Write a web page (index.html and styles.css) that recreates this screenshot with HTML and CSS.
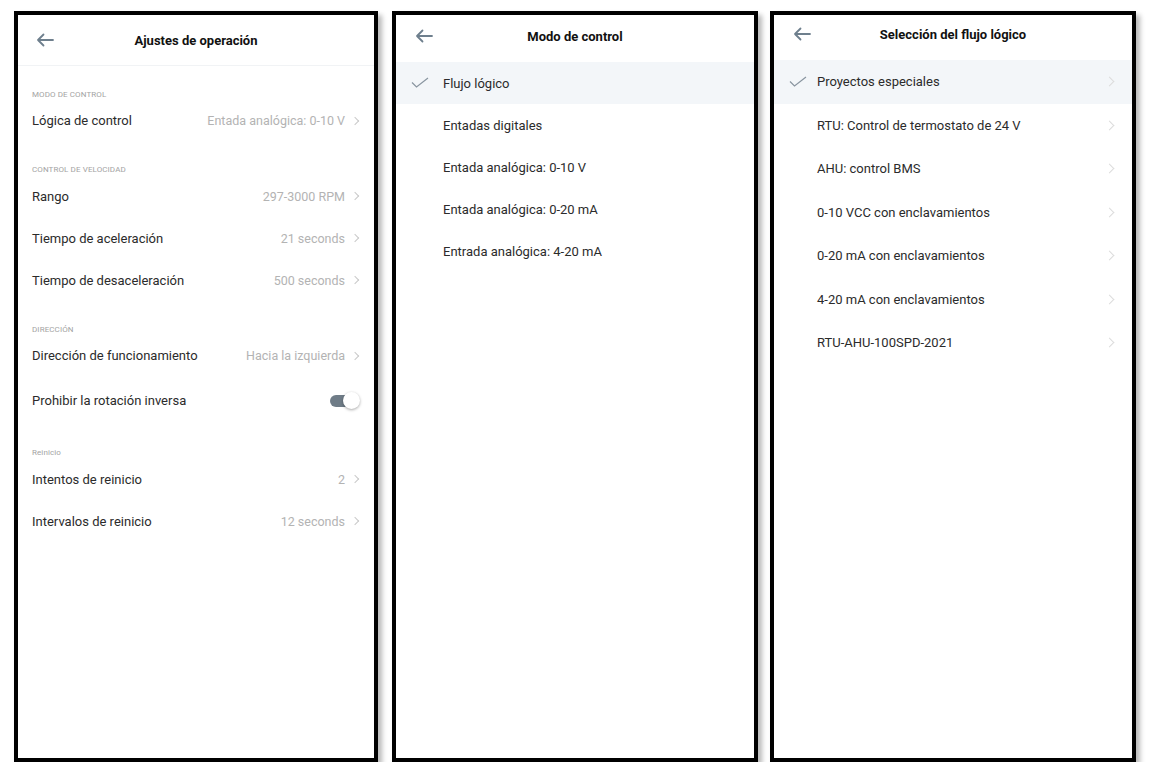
FILE: index.html
```html
<!DOCTYPE html>
<html lang="es">
<head>
<meta charset="utf-8">
<title>Ajustes</title>
<link rel="stylesheet" href="styles.css">
</head>
<body>
<div class="screens">
  <section class="phone phone-1">
    <header class="bar bar-1">
      <svg class="back" viewBox="0 0 18 14" width="18" height="14"><path d="M17 7H2M7.5 1.5L2 7l5.5 5.5" fill="none" stroke="#6e7f8d" stroke-width="1.8" stroke-linecap="round" stroke-linejoin="round"/></svg>
      <h1 class="title">Ajustes de operación</h1>
    </header>
    <div class="group-label">MODO DE CONTROL</div>
    <div class="row"><span class="label">Lógica de control</span><span class="value">Entada analógica: 0-10 V</span><span class="chev"></span></div>
    <div class="group-label">CONTROL DE VELOCIDAD</div>
    <div class="row"><span class="label">Rango</span><span class="value">297-3000 RPM</span><span class="chev"></span></div>
    <div class="row"><span class="label">Tiempo de aceleración</span><span class="value">21 seconds</span><span class="chev"></span></div>
    <div class="row"><span class="label">Tiempo de desaceleración</span><span class="value">500 seconds</span><span class="chev"></span></div>
    <div class="group-label">DIRECCIÓN</div>
    <div class="row"><span class="label">Dirección de funcionamiento</span><span class="value">Hacia la izquierda</span><span class="chev"></span></div>
    <div class="row row-tall"><span class="label">Prohibir la rotación inversa</span><span class="toggle"><span class="knob"></span></span></div>
    <div class="group-label">Reinicio</div>
    <div class="row"><span class="label">Intentos de reinicio</span><span class="value">2</span><span class="chev"></span></div>
    <div class="row"><span class="label">Intervalos de reinicio</span><span class="value">12 seconds</span><span class="chev"></span></div>
  </section>

  <section class="phone phone-2">
    <header class="bar bar-2">
      <svg class="back" viewBox="0 0 18 14" width="18" height="14"><path d="M17 7H2M7.5 1.5L2 7l5.5 5.5" fill="none" stroke="#6e7f8d" stroke-width="1.8" stroke-linecap="round" stroke-linejoin="round"/></svg>
      <h1 class="title">Modo de control</h1>
    </header>
    <div class="opt opt-2 selected"><svg class="check" viewBox="0 0 18 11" width="18" height="11"><path d="M1 5.5l4.5 4.5L17 1" fill="none" stroke="#8995a0" stroke-width="1.2"/></svg><span class="label">Flujo lógico</span></div>
    <div class="opt opt-2"><span class="label">Entadas digitales</span></div>
    <div class="opt opt-2"><span class="label">Entada analógica: 0-10 V</span></div>
    <div class="opt opt-2"><span class="label">Entada analógica: 0-20 mA</span></div>
    <div class="opt opt-2"><span class="label">Entrada analógica: 4-20 mA</span></div>
  </section>

  <section class="phone phone-3">
    <header class="bar bar-3">
      <svg class="back" viewBox="0 0 18 14" width="18" height="14"><path d="M17 7H2M7.5 1.5L2 7l5.5 5.5" fill="none" stroke="#6e7f8d" stroke-width="1.8" stroke-linecap="round" stroke-linejoin="round"/></svg>
      <h1 class="title">Selección del flujo lógico</h1>
    </header>
    <div class="opt opt-3 selected"><svg class="check" viewBox="0 0 18 11" width="18" height="11"><path d="M1 5.5l4.5 4.5L17 1" fill="none" stroke="#8995a0" stroke-width="1.2"/></svg><span class="label">Proyectos especiales</span><span class="chev light"></span></div>
    <div class="opt opt-3"><span class="label">RTU: Control de termostato de 24 V</span><span class="chev light"></span></div>
    <div class="opt opt-3"><span class="label">AHU: control BMS</span><span class="chev light"></span></div>
    <div class="opt opt-3"><span class="label">0-10 VCC con enclavamientos</span><span class="chev light"></span></div>
    <div class="opt opt-3"><span class="label">0-20 mA con enclavamientos</span><span class="chev light"></span></div>
    <div class="opt opt-3"><span class="label">4-20 mA con enclavamientos</span><span class="chev light"></span></div>
    <div class="opt opt-3"><span class="label">RTU-AHU-100SPD-2021</span><span class="chev light"></span></div>
  </section>
</div>
</body>
</html>
```

FILE: styles.css
```css
* { box-sizing: border-box; }

html, body {
  margin: 0;
  background: #ffffff;
}

body {
  font-family: Roboto, "Liberation Sans", sans-serif;
  color: #2b2b2b;
}

.screens {
  display: flex;
  align-items: flex-start;
  padding: 11px 0 0 14px;
  gap: 14px;
}

.phone {
  flex: none;
  width: 364px;
  height: 751px;
  border: 4px solid #000;
  background: #fff;
  box-shadow: 4px 4px 5px rgba(0, 0, 0, 0.28);
  overflow: hidden;
}

.phone-2 { width: 366px; }
.phone-3 { width: 366px; margin-left: -2px; }

/* header bar */
.bar {
  position: relative;
  display: flex;
  align-items: center;
  justify-content: center;
}

.bar-1 {
  height: 51px;
  border-bottom: 1px solid #f1f3f5;
}

.bar-2 {
  height: 47px;
  padding-bottom: 5px;
}

.bar-3 {
  height: 45px;
  padding-bottom: 7px;
}

.back {
  position: absolute;
  left: 18px;
  top: 50%;
  margin-top: -7px;
}

.bar-2 .back,
.bar-3 .back { left: 19px; margin-top: -10px; }

.bar-3 .back { margin-top: -11px; }

.title {
  margin: 0;
  font-size: 13px;
  font-weight: 700;
  color: #111;
  letter-spacing: 0;
}

/* settings list */
.group-label {
  padding: 23.5px 14px 0;
  height: 33.5px;
  line-height: 10px;
  font-size: 8px;
  color: #a3a3a3;
  letter-spacing: 0.1px;
}

.row {
  display: flex;
  align-items: center;
  height: 42px;
  padding: 0 14px;
  font-size: 13px;
}

.row-tall { height: 48px; }

.row .label {
  flex: 1;
  color: #2b2b2b;
}

.value {
  color: #b3b3b3;
  font-size: 12.5px;
}

.chev {
  flex: none;
  width: 6px;
  height: 6px;
  margin-left: 7px;
  margin-right: 2px;
  border-top: 1px solid #c9c9c9;
  border-right: 1px solid #c9c9c9;
  transform: rotate(45deg);
}

.chev.light {
  border-color: #dcdcdc;
  width: 7px;
  height: 7px;
}

.toggle {
  position: relative;
  width: 28px;
  height: 12px;
  margin-right: 2px;
  border-radius: 6px;
  background: #6f7c87;
}

.knob {
  position: absolute;
  right: -2px;
  top: -3px;
  width: 17px;
  height: 17px;
  border-radius: 50%;
  background: #fff;
  box-shadow: 0 1px 3px rgba(0, 0, 0, 0.35);
}

/* option lists */
.opt {
  position: relative;
  display: flex;
  align-items: center;
  font-size: 13px;
  color: #2b2b2b;
}

.opt-2 {
  height: 42px;
  padding-left: 47px;
}

.opt-3 {
  height: 43.5px;
  padding-left: 43px;
  padding-right: 17px;
}

.opt-3 .label { flex: 1; }

.opt.selected { background: #f3f6f9; }

.check {
  position: absolute;
  left: 15px;
  top: 50%;
  margin-top: -6px;
}
```
